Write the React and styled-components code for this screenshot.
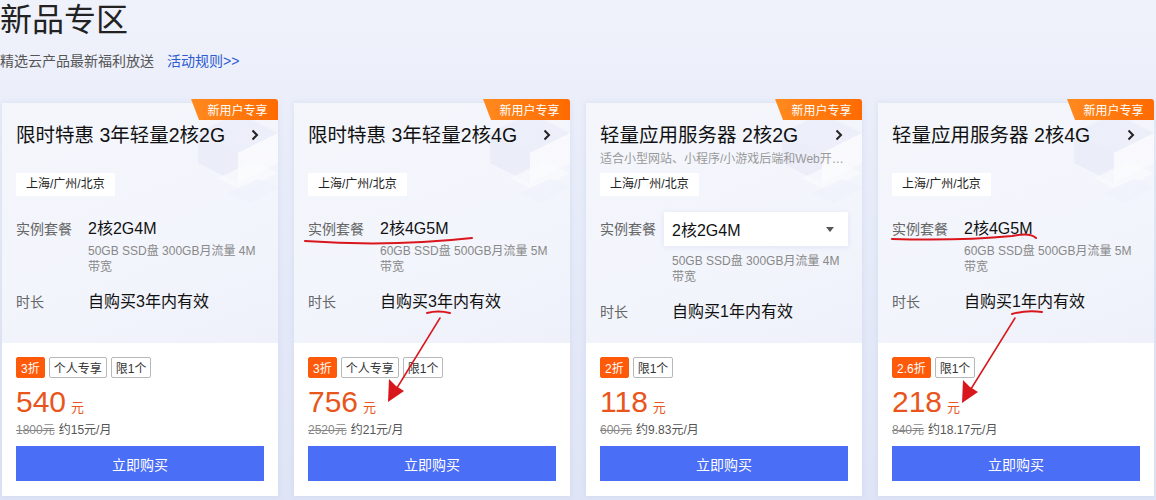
import styled, { createGlobalStyle } from "styled-components";

const GlobalStyle = createGlobalStyle`
  html, body {
    margin: 0;
    padding: 0;
  }
  body {
    font-family: "Liberation Sans", "Noto Sans CJK SC", sans-serif;
    color: #222;
  }
`;

const Page = styled.div`
  position: relative;
  width: 1156px;
  height: 500px;
  overflow: hidden;
  background: linear-gradient(180deg, #f0f2fb 0%, #e9edf9 30%, #dfe5f6 100%);
`;

const Header = styled.header`
  padding: 0;
`;

const Title = styled.h1`
  margin: 0;
  font-size: 32px;
  line-height: 40px;
  font-weight: 400;
  color: #222;
`;

const SubLine = styled.div`
  margin-top: 11px;
  display: flex;
  gap: 13px;
  font-size: 14px;
  line-height: 20px;
  color: #555;
`;

const RuleLink = styled.a`
  color: #2c5bd2;
  text-decoration: none;
`;

const Grid = styled.div`
  margin-top: 32px;
  padding-left: 2px;
  display: grid;
  grid-template-columns: repeat(4, 276px);
  gap: 16px;
`;

const Card = styled.section`
  position: relative;
  display: flex;
  flex-direction: column;
  height: 393px;
  background: #fff;
  box-shadow: 0 0 6px rgba(160, 175, 220, 0.25);
`;

const Upper = styled.div`
  position: relative;
  height: 240px;
  padding: 19px 14px 0;
  box-sizing: border-box;
  background: linear-gradient(160deg, #f4f6fc 0%, #f3f5fc 60%, #eef1fa 100%);
  overflow: hidden;
`;

const Deco = styled.svg`
  position: absolute;
  top: 0;
  right: 0;
  width: 120px;
  height: 110px;
  opacity: 0.6;
  pointer-events: none;
`;

const Badge = styled.div`
  position: absolute;
  top: -4px;
  right: 0;
  z-index: 2;
  width: 87px;
  height: 21px;
  display: flex;
  align-items: center;
  justify-content: center;
  padding-left: 6px;
  box-sizing: border-box;
  font-size: 12px;
  color: #fff;
  background: linear-gradient(90deg, #ff8a1f, #ff6a00);
  clip-path: polygon(0 0, 100% 0, 100% 100%, 8px 100%);
  border-top-right-radius: 3px;
`;

const TitleRow = styled.div`
  position: relative;
  display: flex;
  align-items: center;
  justify-content: space-between;
  height: 26px;
`;

const CardTitle = styled.h2`
  margin: 0;
  font-size: 19.5px;
  font-weight: 400;
  color: #111;
  line-height: 26px;
  white-space: nowrap;
`;

const Chevron = styled.svg`
  width: 8px;
  height: 12px;
  margin-right: 5px;
`;

const CardSub = styled.div`
  position: relative;
  margin-top: 2px;
  height: 18px;
  font-size: 12px;
  line-height: 18px;
  color: #999;
  white-space: nowrap;
`;

const Region = styled.div`
  position: relative;
  display: inline-block;
  margin-top: 5px;
  padding: 0 10px;
  height: 23px;
  line-height: 23px;
  font-size: 12px;
  color: #222;
  background: #fff;
`;

const SpecRow = styled.div`
  position: relative;
  display: flex;
  margin-top: ${(p) => (p.$select ? "16px" : "22px")};
`;

const Label = styled.div`
  width: 72px;
  flex: none;
  font-size: 14px;
  color: #666;
  line-height: ${(p) => (p.$select ? "34px" : "22px")};
`;

const ValueCol = styled.div`
  flex: 1;
  min-width: 0;
`;

const Value = styled.div`
  font-size: 16px;
  line-height: 22px;
  color: #111;
`;

const Select = styled.div`
  display: flex;
  align-items: center;
  justify-content: space-between;
  margin-left: -8px;
  padding: 0 14px 0 8px;
  height: 34px;
  background: #fff;
  box-shadow: 0 1px 6px rgba(150, 165, 210, 0.2);
  font-size: 16px;
  color: #111;
`;

const Caret = styled.svg`
  width: 8px;
  height: 5px;
`;

const Desc = styled.div`
  margin-top: ${(p) => (p.$select ? "7px" : "3px")};
  font-size: 12px;
  line-height: 16px;
  color: #888;
  max-width: 176px;
`;

const DurRow = styled.div`
  position: relative;
  display: flex;
  margin-top: 16px;
  line-height: 22px;
`;

const Lower = styled.div`
  flex: 1;
  padding: 14px 14px 15px;
  display: flex;
  flex-direction: column;
  background: #fff;
`;

const Tags = styled.div`
  display: flex;
  gap: 4px;
`;

const Tag = styled.span`
  display: inline-flex;
  align-items: center;
  height: 21px;
  padding: 0 4px;
  box-sizing: border-box;
  font-size: 12px;
  color: ${(p) => (p.$hot ? "#fff" : "#333")};
  background: ${(p) => (p.$hot ? "#ff5a0a" : "#fff")};
  border: 1px solid ${(p) => (p.$hot ? "#ff5a0a" : "#b8b8b8")};
  border-radius: 2px;
`;

const PriceRow = styled.div`
  margin-top: 6px;
  display: flex;
  align-items: baseline;
  gap: 5px;
  height: 36px;
  line-height: 36px;
  color: #e8561c;
`;

const Price = styled.span`
  font-size: 30px;
`;

const Unit = styled.span`
  font-size: 13px;
`;

const Orig = styled.div`
  margin-top: 2px;
  font-size: 12px;
  line-height: 16px;
  color: #555;

  s {
    color: #888;
    margin-right: 4px;
  }
`;

const BuyButton = styled.button`
  margin-top: 8px;
  height: 35px;
  border: 0;
  border-radius: 0;
  background: #4b6ef6;
  color: #fff;
  font-family: inherit;
  font-size: 14px;
  cursor: pointer;
`;

const Marks = styled.svg`
  position: absolute;
  left: 0;
  top: 0;
  width: 1156px;
  height: 500px;
  pointer-events: none;
`;

const cards = [
  {
    title: "限时特惠 3年轻量2核2G",
    spec: "2核2G4M",
    desc: "50GB SSD盘 300GB月流量 4M 带宽",
    dur: "自购买3年内有效",
    discount: "3折",
    tags: ["个人专享", "限1个"],
    price: "540",
    orig: "1800元",
    monthly: "约15元/月",
  },
  {
    title: "限时特惠 3年轻量2核4G",
    spec: "2核4G5M",
    desc: "60GB SSD盘 500GB月流量 5M 带宽",
    dur: "自购买3年内有效",
    discount: "3折",
    tags: ["个人专享", "限1个"],
    price: "756",
    orig: "2520元",
    monthly: "约21元/月",
  },
  {
    title: "轻量应用服务器 2核2G",
    sub: "适合小型网站、小程序/小游戏后端和Web开…",
    spec: "2核2G4M",
    select: true,
    desc: "50GB SSD盘 300GB月流量 4M 带宽",
    dur: "自购买1年内有效",
    discount: "2折",
    tags: ["限1个"],
    price: "118",
    orig: "600元",
    monthly: "约9.83元/月",
  },
  {
    title: "轻量应用服务器 2核4G",
    spec: "2核4G5M",
    desc: "60GB SSD盘 500GB月流量 5M 带宽",
    dur: "自购买1年内有效",
    discount: "2.6折",
    tags: ["限1个"],
    price: "218",
    orig: "840元",
    monthly: "约18.17元/月",
  },
];

const Decoration = () => (
  <Deco viewBox="0 0 120 110">
    <polygon points="40,30 80,10 120,30 80,50" fill="#e6eaf8" opacity="0.8" />
    <polygon points="40,30 80,50 80,80 40,60" fill="#dfe4f6" opacity="0.7" />
    <polygon points="80,50 120,30 120,60 80,80" fill="#ffffff" opacity="0.8" />
    <polygon points="60,75 95,58 120,70 85,88" fill="#ffffff" opacity="0.7" />
    <polygon points="70,90 100,76 120,84 92,100" fill="#eef1fb" opacity="0.8" />
  </Deco>
);

const ProductCard = ({ c }) => (
  <Card>
    <Badge>新用户专享</Badge>
    <Upper>
      <Decoration />
      <TitleRow>
        <CardTitle>{c.title}</CardTitle>
        <Chevron viewBox="0 0 8 12">
          <path d="M1.5 1.5 L6 6 L1.5 10.5" fill="none" stroke="#222" strokeWidth="2" />
        </Chevron>
      </TitleRow>
      <CardSub>{c.sub || ""}</CardSub>
      <Region>上海/广州/北京</Region>
      <SpecRow $select={c.select}>
        <Label $select={c.select}>实例套餐</Label>
        <ValueCol>
          {c.select ? (
            <Select>
              {c.spec}
              <Caret viewBox="0 0 8 5">
                <path d="M0 0 H8 L4 5 Z" fill="#555" />
              </Caret>
            </Select>
          ) : (
            <Value>{c.spec}</Value>
          )}
          <Desc $select={c.select}>{c.desc}</Desc>
        </ValueCol>
      </SpecRow>
      <DurRow>
        <Label>时长</Label>
        <Value>{c.dur}</Value>
      </DurRow>
    </Upper>
    <Lower>
      <Tags>
        <Tag $hot>{c.discount}</Tag>
        {c.tags.map((t) => (
          <Tag key={t}>{t}</Tag>
        ))}
      </Tags>
      <PriceRow>
        <Price>{c.price}</Price>
        <Unit>元</Unit>
      </PriceRow>
      <Orig>
        <s>{c.orig}</s>
        {c.monthly}
      </Orig>
      <BuyButton>立即购买</BuyButton>
    </Lower>
  </Card>
);

const Annotations = () => (
  <Marks viewBox="0 0 1156 500">
    <g fill="none" stroke="#d9161c" strokeWidth="2" strokeLinecap="round">
      <path d="M305 241 Q390 247 472 238" />
      <path d="M427 313 Q438 310 450 313" />
      <path d="M440 318 L392 396" strokeWidth="1.5" />
      <path d="M892 239 Q960 241 1012 236 Q1030 232 1036 238" />
      <path d="M1012 314 Q1026 310 1042 312" />
      <path d="M1015 318 L966 397" strokeWidth="1.5" />
    </g>
    <g fill="#d9161c">
      <polygon points="388,402 389,379 396,386 404,391" />
      <polygon points="962,403 963,380 970,387 978,392" />
    </g>
  </Marks>
);

const App = () => (
  <Page>
    <GlobalStyle />
    <Header>
      <Title>新品专区</Title>
      <SubLine>
        <span>精选云产品最新福利放送</span>
        <RuleLink href="#">活动规则&gt;&gt;</RuleLink>
      </SubLine>
    </Header>
    <Grid>
      {cards.map((c) => (
        <ProductCard key={c.title} c={c} />
      ))}
    </Grid>
    <Annotations />
  </Page>
);

export default App;
